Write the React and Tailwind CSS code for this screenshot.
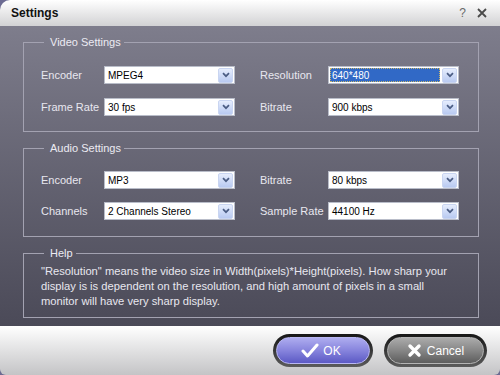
import React from "react";

const font = "font-['Liberation_Sans',Arial,sans-serif]";

function Arrow() {
  return (
    <div className="flex h-[15px] w-[15px] items-center justify-center rounded-[2px] border border-[#c9d5f1] bg-gradient-to-b from-[#e6edfd] to-[#b9caf1]">
      <svg width="8" height="6" viewBox="0 0 8 6">
        <path d="M1 1.2 L4 4.2 L7 1.2" fill="none" stroke="#4b5d84" strokeWidth="1.7" />
      </svg>
    </div>
  );
}

function Select({ value, active }) {
  return (
    <div className="flex h-[18px] w-[131px] items-center border border-[#b9bdc9] bg-white pl-[1px] pr-[1px]">
      {active ? (
        <div className="mr-[2px] flex h-[14px] flex-1 items-center border border-dotted border-[#c9b56a] bg-[#3169c6] pl-[1px] text-[10px] text-white">
          {value}
        </div>
      ) : (
        <div className="flex-1 pl-[2px] text-[10px] text-black">{value}</div>
      )}
      <Arrow />
    </div>
  );
}

function Row({ l1, v1, l2, v2, active }) {
  return (
    <div className="flex h-[18px] items-center">
      <span className="w-[63px]">{l1}</span>
      <Select value={v1} />
      <span className="ml-[25px] w-[68px]">{l2}</span>
      <Select value={v2} active={active} />
    </div>
  );
}

// legend sits after the fieldset's 17px padding, so ml is small
function Group({ title, className, children }) {
  return (
    <fieldset className={`border border-[#a3a2b1] ${className}`}>
      <legend className="ml-[3px] pl-[6px] pr-[3px] leading-[13px] text-[#ecebf3]">{title}</legend>
      {children}
    </fieldset>
  );
}

export default function App() {
  return (
    <div className={`flex h-[375px] w-[500px] flex-col overflow-hidden bg-[#6c6b92] text-[11px] ${font}`}>
      {/* title bar */}
      <div className="flex h-[26px] items-center rounded-tl-[10px] bg-gradient-to-b from-[#ffffff] to-[#d2d2d4] pl-[11px] pr-[13px]">
        <span className="flex-1 text-[12px] font-bold text-[#111]">Settings</span>
        <span className="mr-[11px] text-[12px] text-[#6a6a6a]">?</span>
        <svg width="10" height="10" viewBox="0 0 10 10">
          <path d="M1 1 L9 9 M9 1 L1 9" stroke="#4a4a4a" strokeWidth="1.8" />
        </svg>
      </div>

      {/* body */}
      <div className="flex h-[300px] flex-col bg-gradient-to-b from-[#7e7d8c] to-[#4b4a58] pl-[23px] pr-[21px] pt-[10px] text-[#e8e7ef]">
        <Group title="Video Settings" className="pb-[15px] pl-[17px] pt-[17px]">
          <div className="flex flex-col gap-[14px]">
            <Row l1="Encoder" v1="MPEG4" l2="Resolution" v2="640*480" active />
            <Row l1="Frame Rate" v1="30 fps" l2="Bitrate" v2="900 kbps" />
          </div>
        </Group>

        <Group title="Audio Settings" className="mt-[10px] pb-[16px] pl-[17px] pt-[16px]">
          <div className="flex flex-col gap-[13px]">
            <Row l1="Encoder" v1="MP3" l2="Bitrate" v2="80 kbps" />
            <Row l1="Channels" v1="2 Channels Stereo" l2="Sample Rate" v2="44100 Hz" />
          </div>
        </Group>

        <Group title="Help" className="mt-[10px] pb-[8px] pl-[17px] pt-[4px]">
          <p className="whitespace-nowrap text-[11.2px] leading-[15px]">
            "Resolution" means the video size in Width(pixels)*Height(pixels). How sharp your
            <br />
            display is is dependent on the resolution, and high amount of pixels in a small
            <br />
            monitor will have very sharp display.
          </p>
        </Group>
      </div>

      {/* footer */}
      <div className="flex h-[49px] items-center justify-end gap-[11px] rounded-b-[6px] bg-gradient-to-b from-[#ffffff] to-[#c4c4c6] pr-[13px]">
        <button className="h-[33px] w-[100px] rounded-full bg-gradient-to-b from-[#161616] to-[#5c5c5c] p-[3px]">
          <div className="flex h-full items-center justify-center gap-[4px] rounded-full border border-[#b9b7f2] bg-gradient-to-b from-[#aeacef] via-[#8784dd] to-[#5c59c4] pr-[4px] text-[12px] text-white">
            <svg width="18" height="15" viewBox="0 0 18 15">
              <path d="M2 8 L6.5 13 L16 2" fill="none" stroke="#ffffff" strokeWidth="3" strokeLinecap="round" strokeLinejoin="round" />
            </svg>
            <span>OK</span>
          </div>
        </button>
        <button className="h-[33px] w-[103px] rounded-full bg-gradient-to-b from-[#161616] to-[#5c5c5c] p-[3px]">
          <div className="flex h-full items-center justify-center gap-[5px] rounded-full border border-[#b4b4b4] bg-gradient-to-b from-[#ababab] via-[#868686] to-[#5d5d5d] text-[12px] text-white">
            <svg width="15" height="15" viewBox="0 0 15 15">
              <path d="M3 3 L12 12 M12 3 L3 12" stroke="#ffffff" strokeWidth="3.4" strokeLinecap="round" />
            </svg>
            <span>Cancel</span>
          </div>
        </button>
      </div>
    </div>
  );
}
